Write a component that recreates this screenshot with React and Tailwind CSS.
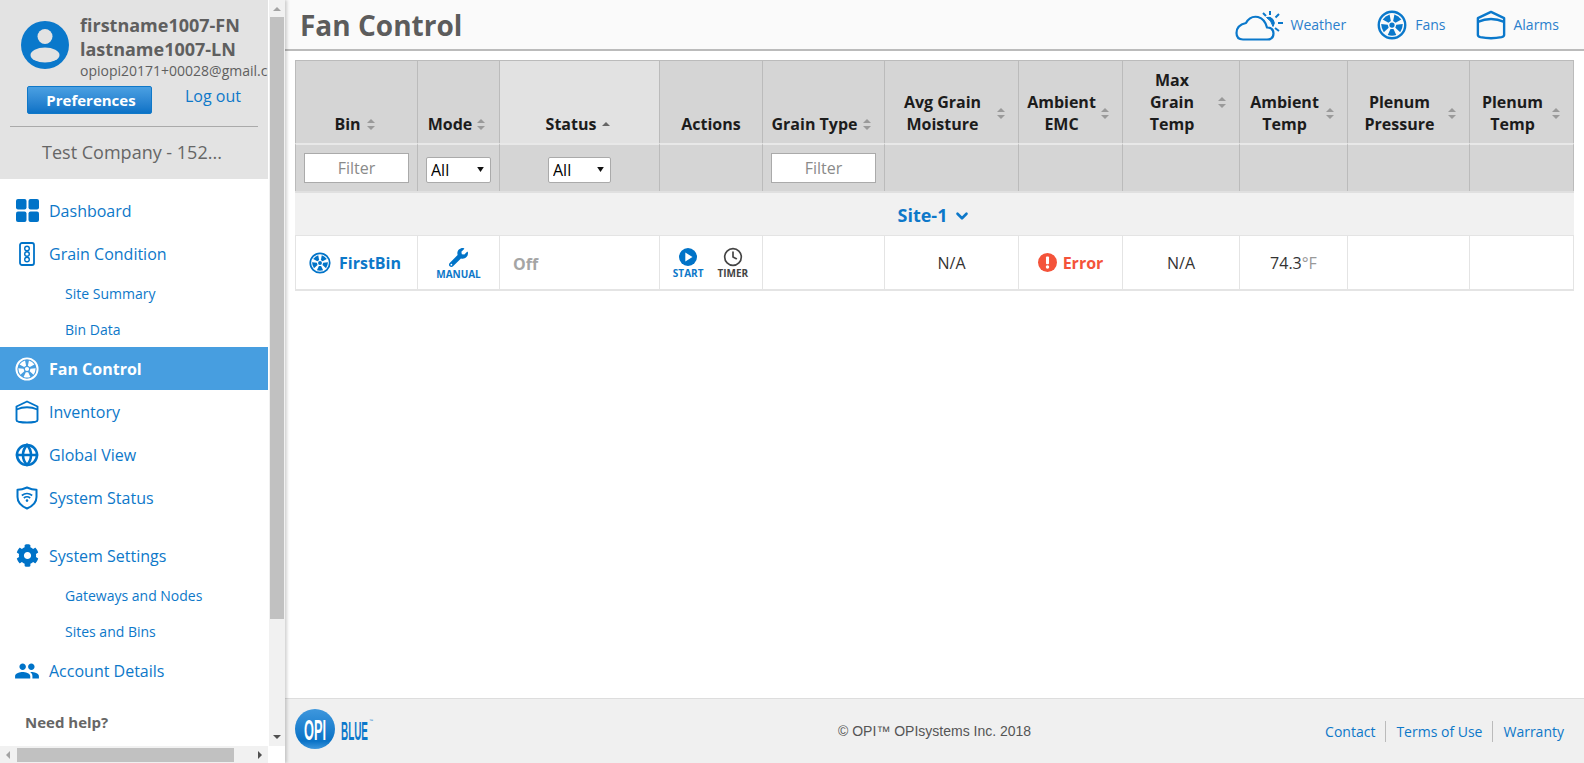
import React from 'react';
import { Globe, Clock, ChevronDown } from 'lucide-react';
import { FaCog, FaWrench } from 'react-icons/fa';
import { MdPeople } from 'react-icons/md';

const font = { fontFamily: '"Open Sans", sans-serif' };

function Fan({ className = '' }) {
  const blades = [0, 72, 144, 216, 288];
  return (
    <svg viewBox="0 0 24 24" className={className} fill="none">
      <circle cx="12" cy="12" r="10.6" stroke="currentColor" strokeWidth="1.9" />
      <circle cx="12" cy="12" r="2.1" fill="currentColor" />
      {blades.map((a) => (
        <path key={a} transform={`rotate(${a + 36} 12 12)`} d="M8.6 4 Q12 3 15.4 4 L13.2 8.8 L10.8 8.8 Z" fill="currentColor" />
      ))}
    </svg>
  );
}

function Silo({ className = '' }) {
  return (
    <svg viewBox="0 0 24 24" className={className} fill="none" stroke="currentColor" strokeWidth="1.9" strokeLinejoin="round">
      <path d="M1.5 6.5 L12 1.5 L22.5 6.5 V20 Q22.5 21.2 20.5 21.7 Q12 23.4 3.5 21.7 Q1.5 21.2 1.5 20 Z" />
      <path d="M1.5 9.5 Q12 5 22.5 9.5" />
    </svg>
  );
}

function DashIcon({ className = '' }) {
  return (
    <svg viewBox="0 0 23 23" className={className} fill="currentColor">
      <rect x="0" y="0" width="10.5" height="10.5" rx="2" />
      <rect x="12.5" y="0" width="10.5" height="10.5" rx="2" />
      <rect x="0" y="12.5" width="10.5" height="10.5" rx="2" />
      <rect x="12.5" y="12.5" width="10.5" height="10.5" rx="2" />
    </svg>
  );
}

function GrainIcon({ className = '' }) {
  return (
    <svg viewBox="0 0 16 24" className={className} fill="none" stroke="currentColor">
      <rect x="1" y="1" width="14" height="22" rx="2" strokeWidth="1.8" />
      <circle cx="8" cy="6.5" r="2.3" strokeWidth="1.4" />
      <circle cx="8" cy="12" r="2.3" strokeWidth="1.4" />
      <circle cx="8" cy="17.5" r="2.3" strokeWidth="1.4" />
    </svg>
  );
}

function ShieldIcon({ className = '' }) {
  return (
    <svg viewBox="0 0 22 24" className={className} fill="none" stroke="currentColor">
      <path d="M11 1.5 Q16 3.8 20.5 3.8 V11 Q20.5 18.5 11 22.5 Q1.5 18.5 1.5 11 V3.8 Q6 3.8 11 1.5 Z" strokeWidth="2" strokeLinejoin="round" />
      <path d="M5.8 9.5 Q11 5.5 16.2 9.5" strokeWidth="1.6" />
      <path d="M7.8 12 Q11 9.5 14.2 12" strokeWidth="1.6" />
      <circle cx="11" cy="14.6" r="1.3" fill="currentColor" stroke="none" />
    </svg>
  );
}

function CloudSun({ className = '' }) {
  return (
    <svg viewBox="0 0 48 32" className={className} fill="none" stroke="currentColor">
      <path d="M8 30.5 H32 Q38.5 30.5 38.5 24.5 Q38.5 18.5 32 18.5 Q30 10 23 8 Q15 6.5 11 14 Q1.5 16 1.5 24 Q1.5 30.5 8 30.5 Z" strokeWidth="2.2" strokeLinejoin="round" />
      <path d="M31.5 8.5 A5.8 5.8 0 0 1 38 17.5 Q36.5 11.5 31.5 8.5 Z" fill="currentColor" stroke="currentColor" strokeWidth="1" />
      <path d="M35 2 V6 M28 4 L31 7 M44 5 L40.5 8.5 M43 14 H48 M40 19 L44 22" strokeWidth="2" />
    </svg>
  );
}

function SortBoth() {
  return (
    <svg viewBox="0 0 8 11" className="w-2 h-[11px] mx-px shrink-0" fill="#9a9a9a">
      <path d="M4 0 L8 4 H0 Z" />
      <path d="M4 11 L0 7 H8 Z" />
    </svg>
  );
}

function NavItem({ icon, label, active }) {
  return (
    <div className={`flex items-center h-[43px] ${active ? 'bg-[#479ee0] text-white font-bold' : 'text-[#0d78c9]'}`}>
      <span className={`w-[49px] flex justify-center pl-[5px] ${active ? 'text-white' : 'text-[#0073c8]'}`}>{icon}</span>
      <span className="text-[16px]">{label}</span>
    </div>
  );
}

function SubItem({ label, h }) {
  return <div className={`flex items-center pl-[65px] text-[14px] text-[#0d78c9] ${h}`}>{label}</div>;
}

function Th({ children }) {
  return (
    <th className="align-bottom border-t border-r border-[#bbbbbb] pb-[8px] pl-1 pr-3 font-bold text-[16px] leading-[22px] text-[#1c1c1c] bg-[#d5d5d5]">
      {children}
    </th>
  );
}

function Head({ lines }) {
  return (
    <div className="flex items-center">
      <div className="flex-1 text-center">
        {lines.map((l) => <div key={l}>{l}</div>)}
      </div>
      <SortBoth />
    </div>
  );
}

function FilterCell({ children, first }) {
  return (
    <td className={`bg-[#d5d5d5] border-t-2 border-t-[#e8e8e8] border-r border-r-[#bbbbbb] ${first ? 'border-l border-l-[#bbbbbb]' : ''}`}>
      {children}
    </td>
  );
}

function FilterInput() {
  return (
    <div className="mx-auto w-[105px] h-[30px] bg-white border border-[#aaaaaa] flex items-center justify-center text-[16px] text-[#8a8a8a] font-normal">Filter</div>
  );
}

function Sel({ w }) {
  return (
    <div className={`relative mx-auto mt-[4px] h-[26px] ${w}`}>
      <select className="appearance-none w-full h-full bg-white border border-[#aaaaaa] rounded-[2px] pl-1 text-[16px] text-black">
        <option>All</option>
      </select>
      <svg viewBox="0 0 8 6" className="absolute right-[7px] top-[10px] w-[7px] h-[5px] pointer-events-none" fill="#111"><path d="M0 0 H8 L4 6 Z" /></svg>
    </div>
  );
}

function Td({ children, first, className = '' }) {
  return (
    <td className={`bg-white border-b-2 border-b-[#e4e4e4] border-r border-r-[#e4e4e4] ${first ? 'border-l border-l-[#e4e4e4]' : ''} ${className}`}>
      {children}
    </td>
  );
}

function Table() {
  const widths = ['w-[123px]', 'w-[82px]', 'w-[160px]', 'w-[103px]', 'w-[122px]', 'w-[134px]', 'w-[104px]', 'w-[117px]', 'w-[108px]', 'w-[122px]', 'w-[104px]'];
  return (
    <table className="table-fixed border-separate border-spacing-0 w-[1279px]">
      <colgroup>
        {widths.map((w, i) => <col key={i} className={w} />)}
      </colgroup>
      <thead>
        <tr className="h-[83px]">
          <th className="align-bottom border-t border-l border-r border-[#bbbbbb] bg-[#d5d5d5] pb-[8px] pr-[3px] font-bold text-[16px] leading-[22px] text-[#1c1c1c]">
            <div className="flex items-center justify-center gap-[5px]">Bin <SortBoth /></div>
          </th>
          <th className="align-bottom border-t border-r border-[#bbbbbb] bg-[#d5d5d5] pb-[8px] pr-[3px] font-bold text-[16px] leading-[22px] text-[#1c1c1c]">
            <div className="flex items-center justify-center gap-[4px]">Mode <SortBoth /></div>
          </th>
          <th className="align-bottom border-t border-r border-[#bbbbbb] bg-[#e2e2e2] pb-[8px] pr-[2px] font-bold text-[16px] leading-[22px] text-[#1c1c1c]">
            <div className="flex items-center justify-center gap-[5px]">
              Status
              <svg viewBox="0 0 8 4" className="w-2 h-1 mx-px" fill="#666"><path d="M4 0 L8 4 H0 Z" /></svg>
            </div>
          </th>
          <th className="align-bottom border-t border-r border-[#bbbbbb] bg-[#d5d5d5] pb-[8px] font-bold text-[16px] leading-[22px] text-[#1c1c1c]">Actions</th>
          <Th><Head lines={['Grain Type']} /></Th>
          <Th><Head lines={['Avg Grain', 'Moisture']} /></Th>
          <Th><Head lines={['Ambient', 'EMC']} /></Th>
          <Th><Head lines={['Max', 'Grain', 'Temp']} /></Th>
          <Th><Head lines={['Ambient', 'Temp']} /></Th>
          <Th><Head lines={['Plenum', 'Pressure']} /></Th>
          <Th><Head lines={['Plenum', 'Temp']} /></Th>
        </tr>
        <tr className="h-[48px]">
          <FilterCell first><FilterInput /></FilterCell>
          <FilterCell><Sel w="w-[65px]" /></FilterCell>
          <FilterCell><Sel w="w-[63px]" /></FilterCell>
          <FilterCell />
          <FilterCell><FilterInput /></FilterCell>
          <FilterCell /><FilterCell /><FilterCell /><FilterCell /><FilterCell /><FilterCell />
        </tr>
      </thead>
      <tbody>
        <tr className="h-[45px]">
          <td colSpan={11} className="bg-[#f1f1f1] border-t-2 border-t-[#e0e0e0] border-b border-b-[#e4e4e4] pt-[3px] text-center">
            <span className="inline-flex items-center gap-[6px] font-bold text-[18px] text-[#0d78c9]">
              Site-1 <ChevronDown className="w-[18px] h-[18px]" strokeWidth={3.5} />
            </span>
          </td>
        </tr>
        <tr className="h-[55px]">
          <Td first>
            <div className="flex items-center pl-[13px] gap-[8px] text-[#0d78c9] font-bold text-[16px]">
              <Fan className="w-[22px] h-[22px] text-[#0073c8]" /> FirstBin
            </div>
          </Td>
          <Td>
            <div className="flex flex-col items-center pt-[3px] text-[#0d78c9] font-bold text-[10px] leading-[11px]">
              <FaWrench className="w-[19px] h-[19px] text-[#0073c8]" />
              <span className="mt-[2px]">MANUAL</span>
            </div>
          </Td>
          <Td><div className="pl-[13px] pt-[3px] font-bold text-[16px] text-[#a5a5a5]">Off</div></Td>
          <Td>
            <div className="flex justify-center gap-[14px] pt-[1px] pr-[1px] font-bold text-[10px] leading-[11px]">
              <div className="flex flex-col items-center text-[#0d78c9]">
                <svg viewBox="0 0 18 18" className="w-[18px] h-[18px]"><circle cx="9" cy="9" r="9" fill="#0073c8" /><path d="M6.3 4.5 L13.5 9 L6.3 13.5 Z" fill="#fff" /></svg>
                <span className="mt-[2px]">START</span>
              </div>
              <div className="flex flex-col items-center text-[#444444]">
                <Clock className="w-[20px] h-[20px] -mt-[1px] -mb-[1px]" strokeWidth={2} />
                <span className="mt-[2px]">TIMER</span>
              </div>
            </div>
          </Td>
          <Td />
          <Td className="text-center text-[16px] text-[#333333]">N/A</Td>
          <Td>
            <div className="flex items-center justify-center gap-[6px] font-bold text-[16px] text-[#f4533a]">
              <svg viewBox="0 0 20 20" className="w-[19px] h-[19px]"><circle cx="10" cy="10" r="10" fill="#f4533a" /><rect x="8.4" y="3.8" width="3.2" height="8" rx="1" fill="#fff" /><circle cx="10" cy="14.8" r="1.8" fill="#fff" /></svg>
              Error
            </div>
          </Td>
          <Td className="text-center text-[16px] text-[#333333]">N/A</Td>
          <Td className="text-center text-[16px] text-[#333333]">74.3<span className="text-[#999999]">°F</span></Td>
          <Td />
          <Td />
        </tr>
      </tbody>
    </table>
  );
}

function Sidebar() {
  return (
    <div className="relative z-10 w-[285px] shrink-0 flex flex-col bg-white shadow-[2px_0_3px_rgba(0,0,0,0.18)]">
      <div className="flex flex-1 min-h-0">
        <div className="w-[268px] overflow-hidden">
          <div className="bg-[#e3e3e3] h-[179px] relative">
            <div className="flex pl-[21px] pt-[13px]">
              <svg viewBox="0 0 48 48" className="w-[48px] h-[48px] mt-[8px] shrink-0">
                <circle cx="24" cy="24" r="24" fill="#0a78cb" />
                <circle cx="24" cy="15.5" r="7.5" fill="#e3e3e3" />
                <ellipse cx="24" cy="34" rx="14.5" ry="7.5" fill="#e3e3e3" />
              </svg>
              <div className="ml-[11px] whitespace-nowrap text-[#5f5f5f]">
                <div className="font-bold text-[18px] leading-[24px]">firstname1007-FN</div>
                <div className="font-bold text-[18px] leading-[24px]">lastname1007-LN</div>
                <div className="text-[14px] leading-[20px]">opiopi20171+00028@gmail.com</div>
              </div>
            </div>
            <div className="flex items-start pl-[27px] mt-[5px]">
              <div className="w-[125px] h-[28px] pl-[3px] rounded-[2px] border border-[#0f78c8] bg-gradient-to-b from-[#4aa0e2] to-[#0a72c6] text-white font-bold text-[15px] flex items-center justify-center">Preferences</div>
              <div className="ml-[33px] -mt-[1px] text-[16px] leading-[22px] text-[#0d78c9]">Log out</div>
            </div>
            <div className="mx-[10px] mt-[12px] border-t border-[#aaaaaa]" />
            <div className="text-center text-[18px] text-[#666666] pt-[12px] pr-[4px]">Test Company - 152...</div>
          </div>
          <div className="pt-[10px]">
            <NavItem icon={<DashIcon className="w-[23px] h-[23px]" />} label="Dashboard" />
            <NavItem icon={<GrainIcon className="w-[16px] h-[24px]" />} label="Grain Condition" />
            <SubItem label="Site Summary" h="h-[36px]" />
            <SubItem label="Bin Data" h="h-[36px]" />
            <NavItem active icon={<Fan className="w-[24px] h-[24px]" />} label="Fan Control" />
            <NavItem icon={<Silo className="w-[24px] h-[24px]" />} label="Inventory" />
            <NavItem icon={<Globe className="w-[24px] h-[24px]" strokeWidth={2.6} />} label="Global View" />
            <NavItem icon={<ShieldIcon className="w-[22px] h-[24px]" />} label="System Status" />
            <div className="h-[15px]" />
            <NavItem icon={<FaCog className="w-[23px] h-[23px]" />} label="System Settings" />
            <SubItem label="Gateways and Nodes" h="h-[36px]" />
            <SubItem label="Sites and Bins" h="h-[36px]" />
            <NavItem icon={<MdPeople className="w-[26px] h-[26px]" />} label="Account Details" />
            <div className="pl-[25px] pt-[19px] font-bold text-[15px] text-[#666666]">Need help?</div>
          </div>
        </div>
        <div className="w-[17px] bg-[#f1f1f1] flex flex-col items-center border-l border-white">
          <svg viewBox="0 0 8 4" className="w-2 h-1 mt-[7px] mb-[6px]" fill="#a3a3a3"><path d="M4 0 L8 4 H0 Z" /></svg>
          <div className="w-[14px] h-[602px] bg-[#c1c1c1]" />
          <div className="flex-1" />
          <svg viewBox="0 0 8 4" className="w-2 h-1 mb-[7px]" fill="#505050"><path d="M0 0 H8 L4 4 Z" /></svg>
        </div>
      </div>
      <div className="h-[17px] w-[268px] bg-[#f1f1f1] flex items-center">
        <svg viewBox="0 0 4 8" className="w-1 h-2 ml-[6px] mr-[7px]" fill="#a3a3a3"><path d="M0 4 L4 0 V8 Z" /></svg>
        <div className="w-[217px] h-[14px] bg-[#c1c1c1]" />
        <div className="flex-1" />
        <svg viewBox="0 0 4 8" className="w-1 h-2 mr-[6px]" fill="#505050"><path d="M4 4 L0 0 V8 Z" /></svg>
      </div>
    </div>
  );
}

function TopLink({ icon, label, className }) {
  return (
    <div className={`flex items-center text-[14px] text-[#2a7fcc] ${className}`}>
      {icon}
      <span>{label}</span>
    </div>
  );
}

export default function App() {
  return (
    <div className="flex w-[1584px] h-[763px] overflow-hidden bg-white" style={font}>
      <Sidebar />
      <div className="flex-1 min-w-0 flex flex-col">
        <div className="h-[51px] shrink-0 bg-[#fafafa] border-b-2 border-[#bbbbbb] flex items-center pl-[15px] pr-[25px]">
          <div className="font-bold text-[28px] text-[#5c5c5c]">Fan Control</div>
          <div className="flex-1" />
          <div className="flex items-center text-[#0073c8]">
            <TopLink icon={<CloudSun className="w-[48px] h-[32px] mr-[7px] text-[#0a78cb]" />} label="Weather" />
            <TopLink className="ml-[31px]" icon={<Fan className="w-[30px] h-[30px] mr-[8px] text-[#0a78cb]" />} label="Fans" />
            <TopLink className="ml-[31px]" icon={<Silo className="w-[30px] h-[30px] mr-[7px] text-[#0a78cb]" />} label="Alarms" />
          </div>
        </div>
        <div className="flex-1 min-h-0 pl-[10px] pt-[9px]">
          <Table />
        </div>
        <div className="h-[65px] shrink-0 bg-[#f0f0f0] border-t border-[#dddddd] flex items-center pl-[10px] pr-[20px]">
          <div className="flex items-center w-[543px] pb-[4px]">
            <svg viewBox="0 0 90 40" className="w-[90px] h-[40px]">
              <defs>
                <linearGradient id="opi" x1="0" y1="0" x2="0" y2="1">
                  <stop offset="0" stopColor="#3e97dd" />
                  <stop offset="0.8" stopColor="#0a72c6" />
                  <stop offset="1" stopColor="#3e97dd" />
                </linearGradient>
              </defs>
              <circle cx="20" cy="20" r="20" fill="url(#opi)" />
              <text transform="translate(9 31) scale(0.425 1)" fontFamily="Liberation Sans, sans-serif" fontWeight="700" fontSize="30" fill="#fff">OPI</text>
              <text transform="translate(46 31) scale(0.38 1)" fontFamily="Liberation Sans, sans-serif" fontWeight="700" fontSize="26" fill="#0a78cb">BLUE</text>
              <text x="74" y="13" fontFamily="Liberation Sans, sans-serif" fontSize="4" fill="#0a78cb">™</text>
            </svg>
          </div>
          <div className="text-[14px] text-[#555555]" style={{ fontFamily: '"Liberation Sans", sans-serif' }}>© OPI™ OPIsystems Inc. 2018</div>
          <div className="flex-1" />
          <div className="flex items-center text-[14px] text-[#0d78c9]">
            <span className="pr-[10px] border-r border-[#bbbbbb]">Contact</span>
            <span className="px-[10px] border-r border-[#bbbbbb]">Terms of Use</span>
            <span className="pl-[10px]">Warranty</span>
          </div>
        </div>
      </div>
    </div>
  );
}
